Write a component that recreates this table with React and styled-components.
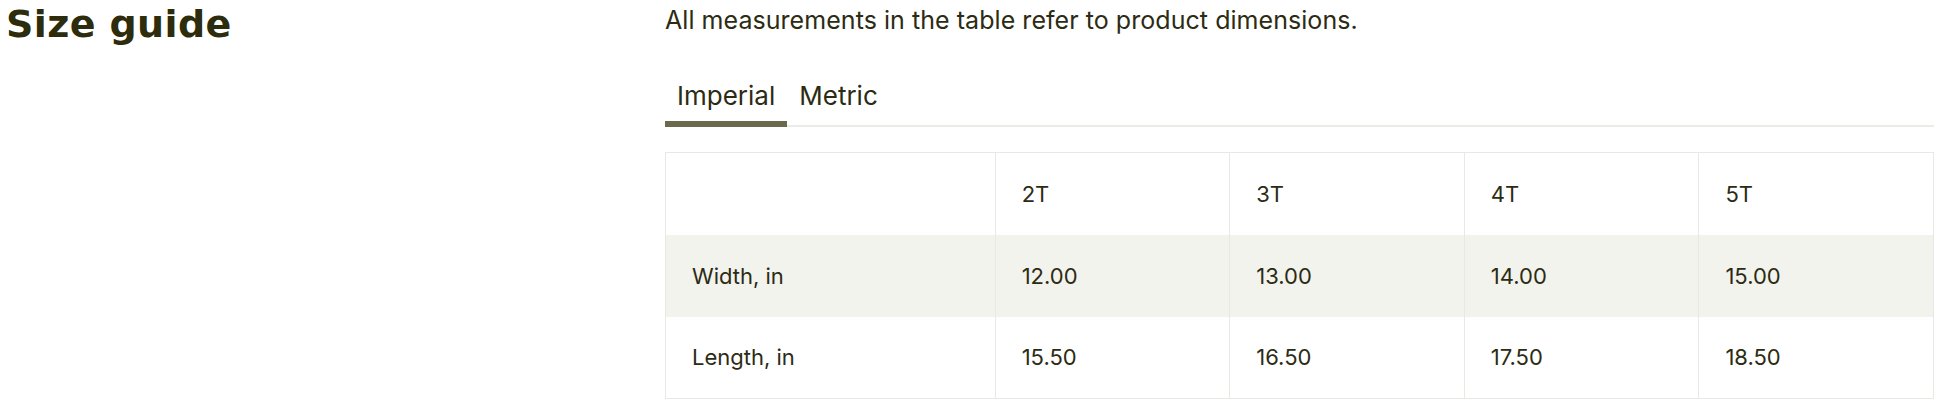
import React, { useState } from "react";
import styled, { createGlobalStyle } from "styled-components";

const Global = createGlobalStyle`
  html, body { margin: 0; padding: 0; background: #ffffff; }
  body { font-family: Inter, "Liberation Sans", sans-serif; color: #2c2b14; }
  * { box-sizing: border-box; }
`;

const Page = styled.div`
  display: flex;
  align-items: flex-start;
  padding: 0 12px 0 6px;
`;

const Title = styled.h2`
  flex: 0 0 659px;
  margin: 0;
  font-family: "DejaVu Sans", sans-serif;
  font-weight: 700;
  font-size: 38px;
  line-height: 48px;
  letter-spacing: 0.4px;
  color: #2d2c0c;
`;

const Content = styled.div`
  flex: 1;
  min-width: 0;
  display: flex;
  flex-direction: column;
`;

const Intro = styled.p`
  margin: 0;
  font-size: 25px;
  line-height: 40px;
  letter-spacing: 0.05px;
  color: #2c2b14;
`;

const TabList = styled.div`
  display: flex;
  margin-top: 27px;
  border-bottom: 2px solid #ececE7;
`;

const Tab = styled.button`
  appearance: none;
  background: none;
  border: none;
  border-bottom: 6px solid ${(p) => (p.$active ? "#6b6a4c" : "transparent")};
  margin-bottom: -2px;
  padding: 14px 12px 10px;
  font-family: inherit;
  font-size: 26px;
  line-height: 30px;
  color: #2c2b14;
  cursor: pointer;
`;

const Table = styled.table`
  margin-top: 25px;
  width: 100%;
  table-layout: fixed;
  border-collapse: collapse;
  border: 1px solid #e9e9e4;
`;

const Row = styled.tr`
  background: ${(p) => (p.$shaded ? "#f3f3ee" : "#ffffff")};
`;

const Cell = styled.td`
  height: 82px;
  padding: 0 26px;
  border-left: 1px solid #e9e9e4;
  border-right: 1px solid #e9e9e4;
  font-size: 22px;
  font-weight: 400;
  text-align: left;
  vertical-align: middle;
  color: #2c2b14;
`;

const data = {
  imperial: {
    sizes: ["2T", "3T", "4T", "5T"],
    rows: [
      { label: "Width, in", values: ["12.00", "13.00", "14.00", "15.00"] },
      { label: "Length, in", values: ["15.50", "16.50", "17.50", "18.50"] },
    ],
  },
  metric: {
    sizes: ["2T", "3T", "4T", "5T"],
    rows: [
      { label: "Width, cm", values: ["30.48", "33.02", "35.56", "38.10"] },
      { label: "Length, cm", values: ["39.37", "41.91", "44.45", "46.99"] },
    ],
  },
};

export default function App() {
  const [unit, setUnit] = useState("imperial");
  const d = data[unit];
  return (
    <>
      <Global />
      <Page>
        <Title>Size guide</Title>
        <Content>
          <Intro>All measurements in the table refer to product dimensions.</Intro>
          <TabList>
            <Tab $active={unit === "imperial"} onClick={() => setUnit("imperial")}>
              Imperial
            </Tab>
            <Tab $active={unit === "metric"} onClick={() => setUnit("metric")}>
              Metric
            </Tab>
          </TabList>
          <Table>
            <colgroup>
              <col style={{ width: "26%" }} />
              <col />
              <col />
              <col />
              <col />
            </colgroup>
            <tbody>
              <Row>
                <Cell />
                {d.sizes.map((s) => (
                  <Cell key={s}>{s}</Cell>
                ))}
              </Row>
              {d.rows.map((r, i) => (
                <Row key={r.label} $shaded={i % 2 === 0}>
                  <Cell>{r.label}</Cell>
                  {r.values.map((v, j) => (
                    <Cell key={j}>{v}</Cell>
                  ))}
                </Row>
              ))}
            </tbody>
          </Table>
        </Content>
      </Page>
    </>
  );
}
